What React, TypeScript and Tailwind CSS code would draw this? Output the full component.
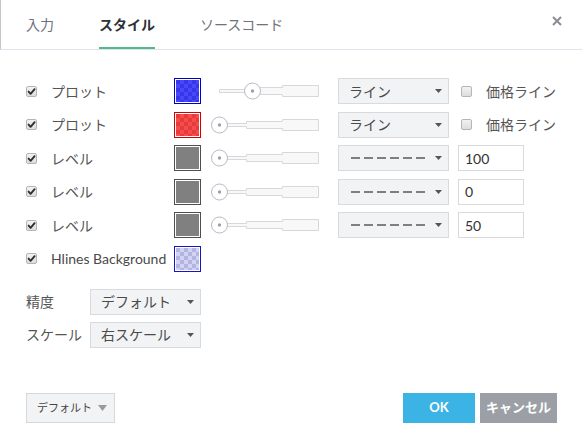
import React from "react";

const FONT = "font-['Lato','Noto_Sans_CJK_JP',sans-serif]";

function CheckBox({ checked }: { checked: boolean }) {
  return (
    <svg width="11" height="11" viewBox="0 0 11 11" className="shrink-0">
      <defs>
        <linearGradient id={checked ? "cbg1" : "cbg0"} x1="0" y1="0" x2="0" y2="1">
          <stop offset="0" stopColor="#f4f4f4" />
          <stop offset="1" stopColor="#dcdcdc" />
        </linearGradient>
      </defs>
      <rect x="0.5" y="0.5" width="10" height="10" rx="1.5" fill={`url(#${checked ? "cbg1" : "cbg0"})`} stroke="#b5b5b5" />
      {checked && (
        <path d="M2.6 5.6 L4.6 7.8 L8.6 3.2" stroke="#2f2f2f" strokeWidth="1.9" fill="none" strokeLinecap="round" strokeLinejoin="round" />
      )}
    </svg>
  );
}

function Swatch({ id, border, a, b }: { id: string; border: string; a: string; b: string }) {
  return (
    <div className="w-[27px] h-[26px] shrink-0 p-[1px] bg-white border" style={{ borderColor: border }}>
      <svg width="23" height="22" className="block">
        <defs>
          <pattern id={id} width="8" height="8" patternUnits="userSpaceOnUse">
            <rect width="8" height="8" fill={a} />
            <rect width="4" height="4" fill={b} />
            <rect x="4" y="4" width="4" height="4" fill={b} />
          </pattern>
        </defs>
        <rect width="23" height="22" fill={`url(#${id})`} />
      </svg>
    </div>
  );
}

function Slider({ pos }: { pos: number }) {
  return (
    <svg width="110" height="26" className="shrink-0 block">
      <path
        d="M8.5 11.5 H35.5 V9.5 H71.5 V7.5 H107.5 V18.5 H71.5 V16.5 H35.5 V14.5 H8.5 Z"
        fill="#f8f8f8"
        stroke="#d6d8db"
      />
      <circle cx={pos} cy="13" r="8" fill="#ffffff" stroke="#b6bac3" />
      <circle cx={pos} cy="13" r="1.7" fill="#9da1a9" />
    </svg>
  );
}

function Arrow() {
  return (
    <svg width="7" height="4" className="shrink-0">
      <path d="M0 0 H7 L3.5 4 Z" fill="#555" />
    </svg>
  );
}

function Select({ children }: { children: React.ReactNode }) {
  return (
    <div className="w-[111px] h-[26px] shrink-0 flex items-center justify-between bg-[#f2f3f5] border border-[#d8dadd] pl-[10px] pr-[6px] text-[14px] text-[#4a4a4a]">
      <div className="flex items-center">{children}</div>
      <Arrow />
    </div>
  );
}

function Dashes() {
  return (
    <div className="flex gap-[4px] pl-[2px]">
      {[0, 1, 2, 3, 4, 5].map((i) => (
        <div key={i} className="w-[9px] h-[2px] bg-[#7f7f7f]" />
      ))}
    </div>
  );
}

function Input({ value }: { value: string }) {
  return (
    <div className="w-[66px] h-[26px] shrink-0 ml-[9px] border border-[#d8dadd] bg-white flex items-center pl-[6px] text-[14px] text-[#333]">
      {value}
    </div>
  );
}

export default function App() {
  const swatches = {
    blue: { border: "#0000c8", a: "#4848f8", b: "#3737ea" },
    red: { border: "#d40000", a: "#f54c4c", b: "#e73b3b" },
    gray: { border: "#4e4e4e", a: "#808080", b: "#808080" },
  };
  return (
    <div className={`w-[582px] h-[446px] bg-white ${FONT} text-[#555] overflow-hidden`}>
      {/* header */}
      <div className="h-[50px] flex border-b border-[#e0e3eb] border-l border-l-[#c6c6c6] pl-[25px] pr-[20px]">
        <div className="flex gap-[45px] h-[49px]">
          <div className="h-full flex items-center pt-[2px] text-[14px] text-[#6f727a] border-b-2 border-transparent">入力</div>
          <div className="h-full flex items-center pt-[2px] text-[14px] font-bold text-[#2e3138] border-b-[2px] border-[#53b987]">スタイル</div>
          <div className="h-full flex items-center pt-[2px] text-[14px] text-[#6f727a] border-b-2 border-transparent">ソースコード</div>
        </div>
        <div className="ml-auto mt-[16px]">
          <svg width="10" height="10" viewBox="0 0 10 10">
            <path d="M1 1 L9 9 M9 1 L1 9" stroke="#8a8d94" strokeWidth="2" />
          </svg>
        </div>
      </div>

      {/* body */}
      <div className="pl-[26px] pt-[28px]">
        <div className="flex flex-col gap-[7.6px]">
          <div className="h-[26px] flex items-center">
            <CheckBox checked />
            <div className="ml-[14px] w-[123px] text-[14px]">プロット</div>
            <Swatch id="p1" {...swatches.blue} />
            <div className="ml-[10px]"><Slider pos={41.5} /></div>
            <div className="ml-[17px]"><Select>ライン</Select></div>
            <div className="ml-[12px]"><CheckBox checked={false} /></div>
            <div className="ml-[14px] text-[14px]">価格ライン</div>
          </div>
          <div className="h-[26px] flex items-center">
            <CheckBox checked />
            <div className="ml-[14px] w-[123px] text-[14px]">プロット</div>
            <Swatch id="p2" {...swatches.red} />
            <div className="ml-[10px]"><Slider pos={8.5} /></div>
            <div className="ml-[17px]"><Select>ライン</Select></div>
            <div className="ml-[12px]"><CheckBox checked={false} /></div>
            <div className="ml-[14px] text-[14px]">価格ライン</div>
          </div>
          {["100", "0", "50"].map((v, i) => (
            <div key={i} className="h-[26px] flex items-center">
              <CheckBox checked />
              <div className="ml-[14px] w-[123px] text-[14px]">レベル</div>
              <Swatch id={`g${i}`} {...swatches.gray} />
              <div className="ml-[10px]"><Slider pos={8.5} /></div>
              <div className="ml-[17px]"><Select><Dashes /></Select></div>
              <Input value={v} />
            </div>
          ))}
          <div className="h-[26px] flex items-center">
            <CheckBox checked />
            <div className="ml-[14px] w-[123px] text-[14px] text-[#4a4a4a] whitespace-nowrap">Hlines Background</div>
            <Swatch id="hb" border="#1515c8" a="#d2d2f2" b="#b4b4e0" />
          </div>
        </div>

        <div className="mt-[17px] flex flex-col gap-[7px]">
          <div className="h-[26px] flex items-center">
            <div className="w-[64px] text-[14px]">精度</div>
            <Select>デフォルト</Select>
          </div>
          <div className="h-[26px] flex items-center">
            <div className="w-[64px] text-[14px]">スケール</div>
            <Select>右スケール</Select>
          </div>
        </div>
      </div>

      {/* footer */}
      <div className="mt-[45px] pl-[26px] pr-[25px] flex items-center">
        <div className="w-[89px] h-[30px] flex items-center justify-between bg-[#f2f3f5] border border-[#d6d8db] pl-[10px] pr-[7px] text-[11px] text-[#444] whitespace-nowrap">
          <span>デフォルト</span>
          <svg width="9" height="6"><path d="M0 0 H9 L4.5 6 Z" fill="#9a9a9a" /></svg>
        </div>
        <div className="ml-auto flex gap-[5px]">
          <div className="w-[72px] h-[30px] bg-[#3bb3e4] flex items-center justify-center text-white font-bold text-[13px]">OK</div>
          <div className="w-[77px] h-[30px] bg-[#9c9fa5] flex items-center justify-center text-white font-bold text-[13px]">キャンセル</div>
        </div>
      </div>
    </div>
  );
}
